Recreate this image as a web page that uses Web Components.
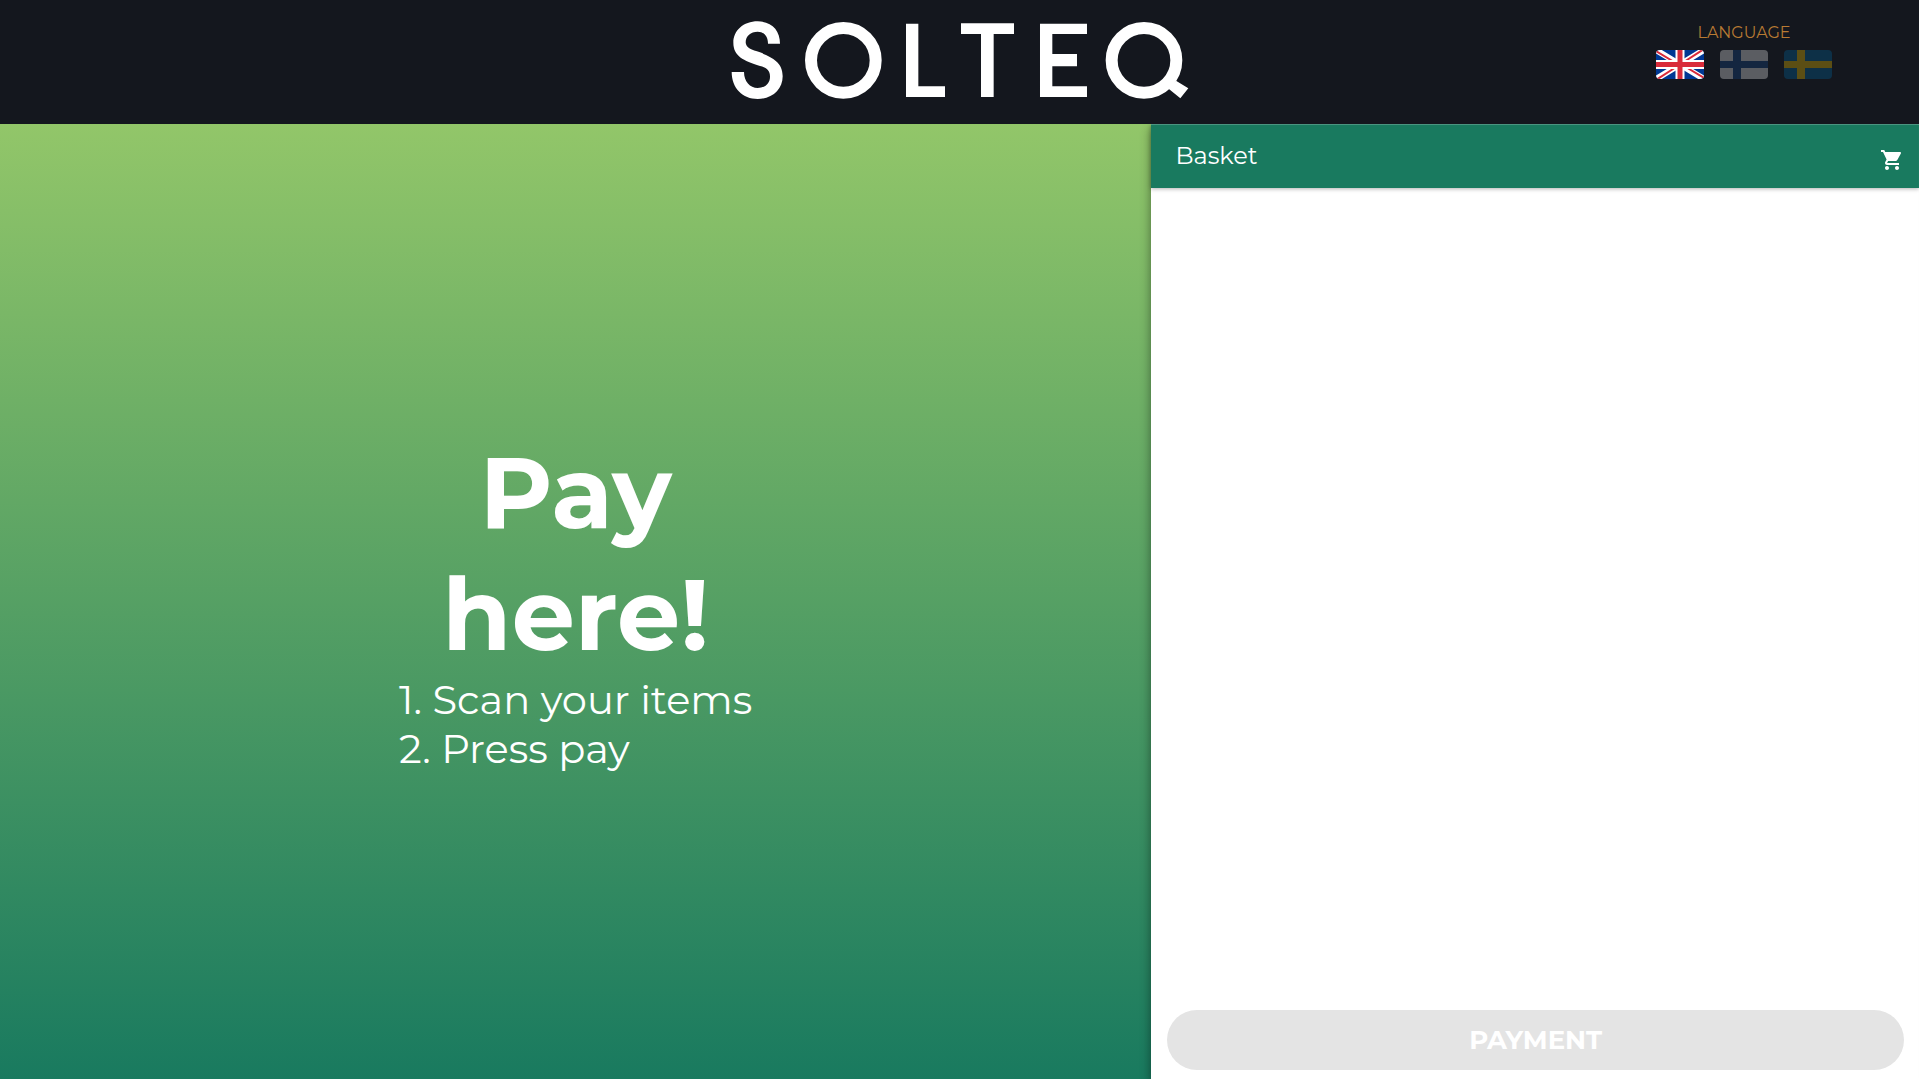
<!DOCTYPE html>
<html lang="en">
<head>
<meta charset="utf-8">
<meta name="viewport" content="width=device-width, initial-scale=1">
<title>Solteq self checkout</title>
<style>
   html, body {
      height: 100%;
      margin: 0;
   }

   body {
      font-family: Montserrat, Inter, "Liberation Sans", sans-serif;
      color: #fff;
   }
</style>
</head>
<body>

<checkout-app>
   <app-header slot="header">
      <solteq-logo></solteq-logo>
      <language-picker slot="end" label="LANGUAGE">
         <flag-button country="gb" name="English" active></flag-button>
         <flag-button country="fi" name="Suomi"></flag-button>
         <flag-button country="se" name="Svenska"></flag-button>
      </language-picker>
   </app-header>

   <pay-guide>
      <span slot="title">Pay<br>here!</span>
      <guide-step>1. Scan your items</guide-step>
      <guide-step>2. Press pay</guide-step>
   </pay-guide>

   <basket-panel slot="side" heading="Basket">
      <pay-button slot="footer" disabled>PAYMENT</pay-button>
   </basket-panel>
</checkout-app>

<script>
class BaseElement extends HTMLElement {
   constructor () {
      super();
      this.attachShadow( { mode: 'open' } )
   }

   connectedCallback () {
      const template = document.createElement("template");
      template.innerHTML = `
         <style>
            * {
               box-sizing: border-box;
            }
            ${this.getStyle()}
         </style>
         ${this.getTemplate()}
      `;
      this.shadowRoot.replaceChildren(template.content.cloneNode(true));
      this.ready();
   }

   ready () {}
}

class CheckoutApp extends BaseElement {
   getTemplate () {
      return `
         <slot name="header"></slot>
         <main class="main">
            <slot></slot>
            <slot name="side"></slot>
         </main>
      `;
   }

   getStyle () {
      return `
         :host {
            display: flex;
            flex-direction: column;
            min-height: 100%;
         }

         .main {
            flex: 1;
            display: grid;
            grid-template-columns: 3fr 2fr;
         }
      `;
   }
}

class AppHeader extends BaseElement {
   getTemplate () {
      return `
         <header class="header">
            <span></span>
            <slot></slot>
            <slot name="end"></slot>
         </header>
      `;
   }

   getStyle () {
      return `
         :host {
            display: block;
            background-color: #14171e;
         }

         .header {
            display: grid;
            grid-template-columns: 1fr auto 1fr;
            align-items: start;
            padding: 21px 87px 25px;
         }

         ::slotted([slot="end"]) {
            justify-self: end;
         }
      `;
   }
}

class SolteqLogo extends BaseElement {
   getTemplate () {
      return `
         <svg viewBox="63 63 1374 235" role="img" aria-label="Solteq">
            <g fill="none" stroke="#fff" stroke-width="36">
               <circle cx="400" cy="181" r="97"/>
               <circle cx="1302" cy="181" r="97"/>
            </g>
            <g fill="#fff">
               <path d="M210 131C210 90 185 64 143 64C100 64 70 92 70 128C70 168 100 182 150 198C170 203 180 212 180 230C180 250 165 264 143 264C120 264 102 245 102 216H65C65 265 98 297 143 297C187 297 218 268 218 229C218 185 185 172 150 157C125 150 107 143 107 127C107 108 122 95 143 95C163 95 174 110 174 131Z"/>
               <path d="M588 71h37v188h80v32H588zM753 70h159v32h-61v189h-38V102h-60zM990 71h141v31h-104v60h74v37h-74v60h104v32H990zM1398 242L1435 265L1411 295L1374 265z"/>
            </g>
         </svg>
      `;
   }

   getStyle () {
      return `
         :host {
            display: block;
            width: 458px;
         }

         svg {
            display: block;
            width: 100%;
         }
      `;
   }
}

class LanguagePicker extends BaseElement {
   getTemplate () {
      return `
         <div class="label" id="label">${this.getAttribute('label')}</div>
         <div class="flags" role="group" aria-labelledby="label"><slot></slot></div>
      `;
   }

   getStyle () {
      return `
         :host {
            display: flex;
            flex-direction: column;
            align-items: center;
            gap: 5px;
         }

         .label {
            font-size: 16px;
            line-height: 24px;
            color: #b87a33;
         }

         .flags {
            display: flex;
            gap: 16px;
         }
      `;
   }

   ready () {
      this.addEventListener("click", (e) => {
         const flag = e.target.closest('flag-button');
         if( !flag ) return;
         this.querySelectorAll('flag-button').forEach( (item) => item.toggleAttribute('active', item === flag) );
      })
   }
}

const FLAGS = {
   gb: `
      <rect width="48" height="29" fill="#003893"/>
      <path d="M0 0L48 29M48 0L0 29" stroke="#fff" stroke-width="6"/>
      <path d="M0 1L24 15.5M24 14.5L48 -1M48 28L24 13.5M24 14.5L0 30" stroke="#d92b3a" stroke-width="2"/>
      <path d="M24 0V29M0 14.5H48" stroke="#fff" stroke-width="9"/>
      <path d="M24 0V29M0 14.5H48" stroke="#d92b3a" stroke-width="5"/>
   `,
   fi: `
      <rect width="48" height="29" fill="#fff"/>
      <path fill="#174a8f" d="M13 0h8v29h-8zM0 11h48v7H0z"/>
   `,
   se: `
      <rect width="48" height="29" fill="#006aa7"/>
      <path fill="#fecc00" d="M13 0h8v29h-8zM0 11h48v7H0z"/>
   `
};

class FlagButton extends BaseElement {
   getTemplate () {
      return `
         <button type="button" aria-label="${this.getAttribute('name')}">
            <svg viewBox="0 0 48 29" aria-hidden="true">${FLAGS[this.getAttribute('country')]}</svg>
         </button>
      `;
   }

   getStyle () {
      return `
         :host {
            display: block;
            opacity: 0.3;
         }

         :host([active]) {
            opacity: 1;
         }

         button {
            display: block;
            width: 48px;
            padding: 0;
            border: 0;
            border-radius: 4px;
            overflow: hidden;
            background: none;
            cursor: pointer;
         }

         svg {
            display: block;
            width: 100%;
         }
      `;
   }
}

class PayGuide extends BaseElement {
   getTemplate () {
      return `
         <h1><slot name="title"></slot></h1>
         <div role="list"><slot></slot></div>
      `;
   }

   getStyle () {
      return `
         :host {
            display: flex;
            flex-direction: column;
            align-items: center;
            justify-content: center;
            background: linear-gradient(#92c669, #197a5f);
         }

         h1 {
            margin: 0;
            font-size: 100px;
            line-height: 122px;
            font-weight: 700;
            text-align: center;
         }
      `;
   }
}

class GuideStep extends BaseElement {
   getTemplate () {
      return `<slot></slot>`;
   }

   getStyle () {
      return `
         :host {
            display: block;
            font-size: 40px;
            line-height: 49px;
         }
      `;
   }

   ready () {
      this.setAttribute('role', 'listitem');
   }
}

class BasketPanel extends BaseElement {
   getTemplate () {
      return `
         <header class="bar">
            <h2>${this.getAttribute('heading')}</h2>
            <svg viewBox="0 0 24 24" aria-hidden="true">
               <path fill="currentColor" d="M7 18c-1.1 0-1.99.9-1.99 2S5.9 22 7 22s2-.9 2-2-.9-2-2-2zM1 2v2h2l3.6 7.59-1.35 2.45c-.16.28-.25.61-.25.96 0 1.1.9 2 2 2h12v-2H7.42c-.14 0-.25-.11-.25-.25l.03-.12.9-1.63h7.45c.75 0 1.41-.41 1.75-1.03l3.58-6.49c.08-.14.12-.31.12-.48 0-.55-.45-1-1-1H5.21l-.94-2H1zm16 16c-1.1 0-1.99.9-1.99 2s.89 2 1.99 2 2-.9 2-2-.9-2-2-2z"/>
            </svg>
         </header>
         <section class="items"></section>
         <footer><slot name="footer"></slot></footer>
      `;
   }

   getStyle () {
      return `
         :host {
            display: flex;
            flex-direction: column;
            background-color: #fff;
            box-shadow: 0 4px 10px rgba(0,0,0,0.45);
            /* keep the shadow on the left edge only */
            clip-path: inset(0 0 0 -16px);
         }

         .bar {
            display: flex;
            align-items: flex-end;
            justify-content: space-between;
            padding: 16px 15px 16px 24px;
            background-color: #197a5f;
            box-shadow: 0 1px 4px rgba(0,0,0,0.3);
         }

         h2 {
            margin: 0;
            font-size: 24px;
            line-height: 32px;
            font-weight: 400;
         }

         svg {
            width: 24px;
            height: 24px;
         }

         .items {
            flex: 1;
         }

         footer {
            padding: 9px 15px 9px 16px;
         }
      `;
   }
}

class PayButton extends BaseElement {
   getTemplate () {
      return `<button type="button" ${this.hasAttribute('disabled') ? 'disabled' : ''}><slot></slot></button>`;
   }

   getStyle () {
      return `
         :host {
            display: block;
         }

         button {
            width: 100%;
            height: 60px;
            border: 0;
            border-radius: 30px;
            background-color: #197a5f;
            color: #fff;
            font-family: inherit;
            font-size: 26px;
            font-weight: 700;
         }

         button:disabled {
            background-color: #e4e4e4;
         }
      `;
   }
}

customElements.define("checkout-app", CheckoutApp);
customElements.define("app-header", AppHeader);
customElements.define("solteq-logo", SolteqLogo);
customElements.define("language-picker", LanguagePicker);
customElements.define("flag-button", FlagButton);
customElements.define("pay-guide", PayGuide);
customElements.define("guide-step", GuideStep);
customElements.define("basket-panel", BasketPanel);
customElements.define("pay-button", PayButton);
</script>
</body>
</html>
